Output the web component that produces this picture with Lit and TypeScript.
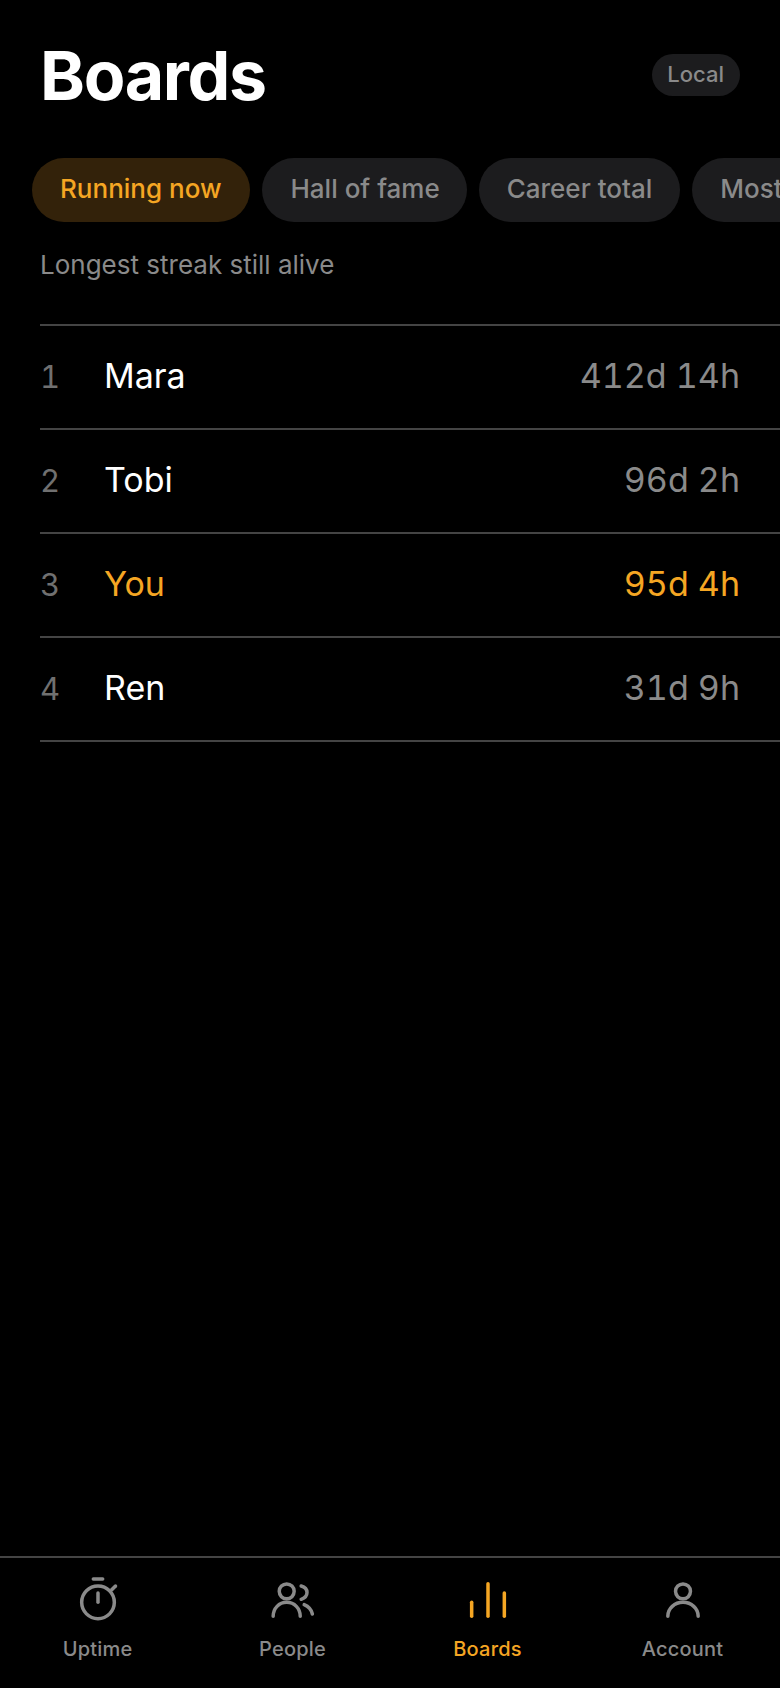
import { LitElement, html, css, svg } from "lit";
import { customElement } from "lit/decorators.js";

const rows = [
  { n: 1, name: "Mara", val: "412d 14h" },
  { n: 2, name: "Tobi", val: "96d 2h" },
  { n: 3, name: "You", val: "95d 4h", me: true },
  { n: 4, name: "Ren", val: "31d 9h" },
];
const chips = ["Running now", "Hall of fame", "Career total", "Most resets"];

const icons: Record<string, any> = {
  Uptime: svg`<circle cx="12" cy="13" r="7"/><path d="M12 9v4"/><path d="M10 3h4"/><path d="M18 7.500l1.500-1.500"/>`,
  People: svg`<circle cx="9.300" cy="8.300" r="3.200"/><path d="M3.500 19c0-3.400 2.500-6 5.800-6s5.800 2.600 5.800 6"/><path d="M15.500 6c1.500.4 2.500 1.400 2.500 2.800s-1 2.400-2.500 2.900"/><path d="M16.800 14c1.900.8 3.100 2.200 3.500 4"/>`,
  Boards: svg`<path d="M5 13v6"/><path d="M12 5v14"/><path d="M19 9v10"/>`,
  Account: svg`<circle cx="12" cy="8.300" r="3.200"/><path d="M5.500 19c0-3.400 2.900-6 6.500-6s6.500 2.600 6.500 6"/>`,
};

@customElement("app-root")
export class AppRoot extends LitElement {
  static styles = css`
    :host {
      display: flex;
      flex-direction: column;
      width: 780px;
      height: 1688px;
      background: #000;
      color: #fff;
      font-family: Inter, "Liberation Sans", sans-serif;
      overflow: hidden;
    }
    .main { flex: 1; min-height: 0; display: flex; flex-direction: column; }
    .header {
      display: flex;
      align-items: center;
      justify-content: space-between;
      padding: 36px 40px 0;
      height: 78px;
    }
    h1 { margin: 0; font-size: 68px; line-height: 78px; font-weight: 700; letter-spacing: -1.36px; }
    .badge {
      font-size: 22px;
      line-height: 41px;
      padding: 0 16px 1px 15px;
      border-radius: 21px;
      background: #1c1c1e;
      color: #8a8a8a;
      font-weight: 500;
    }
    .chips {
      display: flex;
      gap: 12px;
      margin-top: 44px;
      padding-left: 32px;
      white-space: nowrap;
    }
    .chip {
      flex: none;
      height: 64px;
      line-height: 62px;
      padding: 0 28px;
      border-radius: 32px;
      background: #1c1c1e;
      color: #8a8a8a;
      font-size: 26px;
      font-weight: 500;
    }
    .chip.on { background: #33220a; color: #f5a623; padding-right: 29px; }
    .chip:nth-child(2) { padding-right: 27px; }
    .sub {
      margin: 27px 0 0 40px;
      font-size: 26px;
      line-height: 32px;
      color: #8a8a8a;
    }
    .list { margin: 43px 0 0 40px; border-top: 2px solid #444; }
    .row {
      display: flex;
      align-items: baseline;
      box-sizing: border-box;
      height: 104px;
      padding: 30px 40px 0 0;
      border-bottom: 2px solid #444;
      font-size: 34px;
      line-height: 40px;
      font-variant-numeric: tabular-nums;
    }
    .n { width: 64px; font-size: 31px; color: #707070; }
    .name { flex: 1; }
    .val { color: #8a8a8a; }
    .me .name, .me .val { color: #f5a623; }
    nav {
      flex: none;
      height: 130px;
      border-top: 2px solid #444;
      display: grid;
      grid-template-columns: repeat(4, 1fr);
    }
    .tab {
      display: flex;
      flex-direction: column;
      align-items: center;
      padding-top: 14px;
      color: #8a8a8a;
      font-size: 20px;
      letter-spacing: 0.2px;
      font-weight: 500;
      line-height: 28px;
    }
    .tab.on { color: #f5a623; }
    .tab svg {
      width: 56px;
      height: 56px;
      fill: none;
      stroke: currentColor;
      stroke-width: 1.500;
      stroke-linecap: round;
      stroke-linejoin: round;
      margin-bottom: 7px;
    }
  `;

  render() {
    return html`
      <div class="main">
        <div class="header"><h1>Boards</h1><span class="badge">Local</span></div>
        <div class="chips">
          ${chips.map((c, i) => html`<div class="chip ${i === 0 ? "on" : ""}">${c}</div>`)}
        </div>
        <div class="sub">Longest streak still alive</div>
        <div class="list">
          ${rows.map(
            (r) => html`<div class="row ${r.me ? "me" : ""}">
              <span class="n">${r.n}</span><span class="name">${r.name}</span><span class="val">${r.val}</span>
            </div>`
          )}
        </div>
      </div>
      <nav>
        ${Object.keys(icons).map(
          (k) => html`<div class="tab ${k === "Boards" ? "on" : ""}">
            <svg viewBox="0 0 24 24">${icons[k]}</svg><span>${k}</span>
          </div>`
        )}
      </nav>
    `;
  }
}
